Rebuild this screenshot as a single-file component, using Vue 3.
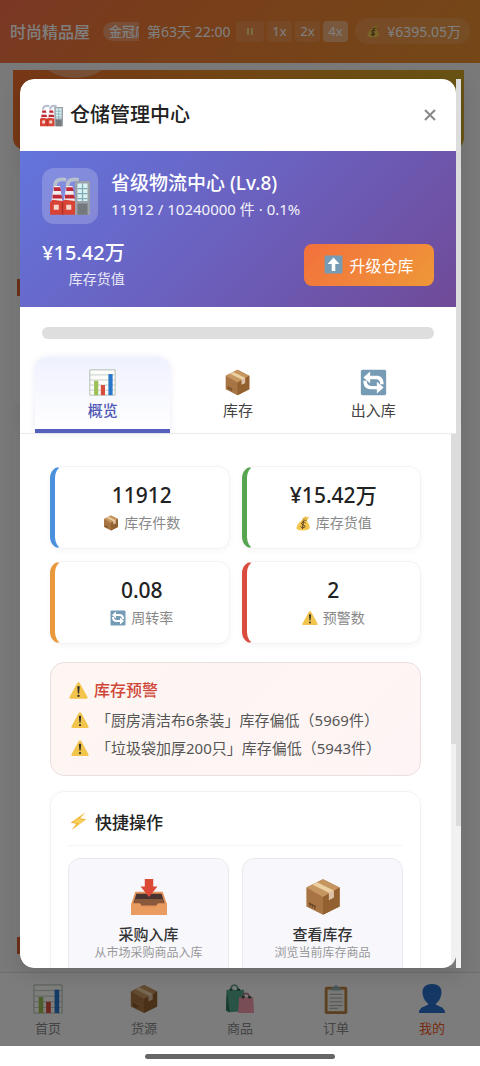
<template>
  <div class="page">
    <svg class="sprite" aria-hidden="true">
      <symbol id="factory" viewBox="0 0 32 32">
        <path d="M4 8c0-5 4-6 9-5M14 8c0-5 4-6 9-5" fill="none" stroke="#b7c0cf" stroke-width="3" />
        <path d="M20 4h12v27H20z" fill="#9ba1a8" />
        <path d="M22 6h8v14h-8z" fill="#d9f1f2" />
        <path d="M22 10h8M22 14h8M22 18h8M26 6v14" stroke="#7eabb5" stroke-width="1" />
        <path d="M22 22h8v9h-8z" fill="#74797e" />
        <path d="M3 8h5l2 13H1zM13 8h5l2 13h-9z" fill="#f3eeee" />
        <path d="M3 9h5l1 3H3zM2 15h7l1 3H2zM13 9h5l1 3h-6zM12 15h7l1 3h-8z" fill="#bd2937" />
        <path d="M0 21l2-2 8 1 2-1 8 1v11H0z" fill="#d94335" />
        <path d="M10 21v10" stroke="#a62f2a" stroke-width="1" />
        <path d="M3 23h4v4H3zM13 23h4v4h-4z" fill="#f5d7cd" />
      </symbol>
      <symbol id="chart" viewBox="0 0 32 32">
        <path d="M1 1h30v30H1z" fill="#fcfdfb" stroke="#aab5aa" />
        <path d="M1 7h30M1 13h30M1 19h30M1 25h30" stroke="#bdc8bd" />
        <path d="M6 14h5v17H6z" fill="#9dbf58" />
        <path d="M14 19h5v12h-5z" fill="#d84d3c" />
        <path d="M23 6h5v25h-5z" fill="#2877cb" />
      </symbol>
      <symbol id="box" viewBox="0 0 32 32">
        <path d="M16 1l14 7v16l-14 7L2 24V8z" fill="#a87443" />
        <path d="M16 1l14 7-14 8L2 8z" fill="#c59660" />
        <path d="M16 16l14-8v16l-14 7z" fill="#93602f" />
        <path d="M7 5.500l4-2 14 7v6l-4 2v-6z" fill="#ecd0a0" />
        <path d="M21 12.500l4-2v6l-4 2z" fill="#ddbfa8" />
        <path d="M5 22v2M7 23v2M9 24v2M4 21l6 3" stroke="#684524" />
      </symbol>
      <symbol id="cycle" viewBox="0 0 32 32">
        <rect x="1" y="1" width="30" height="30" rx="2" fill="#769cb5" />
        <path
          d="M4 10l8-7v5h7c6 0 9 3 9 10h-4c0-4-2-6-5-6h-7v5zM28 22l-8-7v5h-7c-3 0-5-2-5-6H4c0 7 3 10 9 10h7v5z"
          fill="#fff"
        />
      </symbol>
      <symbol id="up" viewBox="0 0 32 32">
        <rect x="1" y="1" width="30" height="30" rx="2" fill="#769cb5" />
        <path d="M16 4l10 11h-7v12h-6V15H6z" fill="#fff" />
      </symbol>
      <symbol id="money" viewBox="0 0 32 32">
        <path d="M17 9c-7 2-15 13-14 18 1 5 23 5 26 0 2-4-3-14-8-18z" fill="#f3c64e" />
        <path d="M16 9l-2-4 4 1 3-4 2 3 6-2-6 8z" fill="#e8b63d" />
        <path d="M15 10l8 1" stroke="#8b642c" stroke-width="2" />
        <path d="M21 16c-3-3-8-2-8 1 0 4 7 2 7 6 0 3-6 3-9 0M17 12l-2 16" fill="none" stroke="#5c4223" stroke-width="2" />
      </symbol>
      <symbol id="warn" viewBox="0 0 32 32">
        <path d="M16 2c1 0 2 1 3 3l12 22c1 2 0 3-2 3H3c-2 0-3-1-2-3L13 5c1-2 2-3 3-3z" fill="#f2c44c" />
        <path d="M14 10c0-2 4-2 4 0l-1 11h-2z" fill="#30302c" />
        <circle cx="16" cy="25" r="2" fill="#30302c" />
      </symbol>
      <symbol id="bolt" viewBox="0 0 32 32">
        <path d="M28 0L1 19l10 2-8 11 26-19-11-2z" fill="#f1b53b" />
        <path d="M28 0L6 18l10 2L3 32l22-18-11-2z" fill="#f8d25d" />
      </symbol>
      <symbol id="inbox" viewBox="0 0 36 36">
        <path d="M5 13h26l4 12v10H1V25z" fill="#e4935a" />
        <path d="M6 15h24l3 10H3z" fill="#493331" />
        <path d="M5 20h26l2 6H3z" fill="#8a593b" />
        <path d="M1 24h8c2 0 1 4 4 4h10c3 0 2-4 4-4h8v11H1z" fill="#e99b60" />
        <path d="M14 1h8v7h4l-8 10-8-10h4z" fill="#dc4937" />
      </symbol>
      <symbol id="bags" viewBox="0 0 32 32">
        <path d="M6 8c0-9 8-9 8 0" fill="none" stroke="#6fa397" stroke-width="2" />
        <path d="M2 6h18l2 23-19 1-2-3z" fill="#52a78a" />
        <path d="M2 6l3 24-4-2z" fill="#2d755d" />
        <path d="M15 14h15l1 17H14z" fill="#f09aac" />
        <path d="M19 16c0-8 7-8 7 0" fill="none" stroke="#b57480" stroke-width="2" />
        <path d="M5 6h3M13 6h3M18 14h3M25 14h3" stroke="#234b41" stroke-width="2" />
      </symbol>
      <symbol id="clip" viewBox="0 0 32 32">
        <rect x="4" y="3" width="24" height="29" rx="2" fill="#b9803e" />
        <path d="M7 6h18v23H7z" fill="#f1f2eb" />
        <path d="M11 7V4h3c0-4 4-4 4 0h3v3z" fill="#8fb0b8" />
        <path d="M9 11h14M9 15h14M9 19h14M9 23h14M9 26h9" stroke="#9fa7a7" />
      </symbol>
      <symbol id="person" viewBox="0 0 32 32">
        <path d="M16 0c8 0 11 5 10 11-1 5-3 8-6 10 0 3 10 2 10 10H2c0-8 10-7 10-10-3-2-5-5-6-10C5 5 8 0 16 0z" fill="#2a6fc9" />
      </symbol>
    </svg>

    <header class="topbar">
      <strong class="shop">时尚精品屋</strong>
      <span class="rank">金冠店</span>
      <span class="clock">第63天 22:00</span>
      <div class="speeds">
        <button class="speed pause" aria-label="暂停"><i></i><i></i></button>
        <button v-for="s in speeds" :key="s" class="speed" :class="{ on: s === '4x' }">{{ s }}</button>
      </div>
      <span class="cash"><svg><use href="#money" /></svg>¥6395.05万</span>
    </header>

    <main class="backdrop">
      <div class="hero"><div class="hero-badge"></div></div>
      <div class="panel"><i class="mark"></i></div>
      <div class="panel low"><i class="mark"></i></div>
    </main>

    <nav class="bottom-nav">
      <a v-for="n in navs" :key="n.name" href="#" class="nav-item" :class="{ active: n.name === '我的' }">
        <svg><use :href="n.icon" /></svg>
        {{ n.name }}
      </a>
    </nav>
    <div class="home-strip"><div class="home-bar"></div></div>

    <div class="overlay">
      <section class="modal" role="dialog" aria-labelledby="modal-title">
        <div class="modal-main">
          <div class="modal-head">
            <h2 id="modal-title"><svg><use href="#factory" /></svg>仓储管理中心</h2>
            <button class="close" aria-label="关闭">
              <svg viewBox="0 0 12 12"><path d="M1 1l10 10M11 1L1 11" /></svg>
            </button>
          </div>

          <div class="summary">
            <div class="depot">
              <div class="depot-icon"><svg><use href="#factory" /></svg></div>
              <div>
                <h3>省级物流中心 (Lv.8)</h3>
                <p>11912 / 10240000 件 · 0.1%</p>
              </div>
            </div>
            <div class="value-row">
              <div class="value">
                <strong>¥15.42万</strong>
                <span>库存货值</span>
              </div>
              <button class="upgrade"><svg><use href="#up" /></svg>升级仓库</button>
            </div>
          </div>

          <div class="capacity"><div class="track"></div></div>

          <div class="tabs" role="tablist">
            <button
              v-for="t in tabs"
              :key="t.name"
              class="tab"
              :class="{ active: t.name === tab }"
              role="tab"
              :aria-selected="t.name === tab"
              @click="tab = t.name"
            >
              <svg><use :href="t.icon" /></svg>
              {{ t.name }}
            </button>
          </div>

          <div class="body">
            <div class="content">
              <div class="stats">
                <div v-for="s in stats" :key="s.label" class="stat" :class="s.color">
                  <strong>{{ s.value }}</strong>
                  <span><svg><use :href="s.icon" /></svg>{{ s.label }}</span>
                </div>
              </div>

              <div class="alerts">
                <h4><svg><use href="#warn" /></svg>库存预警</h4>
                <ul>
                  <li v-for="a in alerts" :key="a"><svg><use href="#warn" /></svg>{{ a }}</li>
                </ul>
              </div>

              <div class="quick">
                <h4><svg><use href="#bolt" /></svg>快捷操作</h4>
                <div class="actions">
                  <button v-for="a in actions" :key="a.name" class="action">
                    <svg><use :href="a.icon" /></svg>
                    <strong>{{ a.name }}</strong>
                    <span>{{ a.desc }}</span>
                  </button>
                </div>
              </div>
            </div>
            <div class="bar"><div class="thumb inner"></div></div>
          </div>
        </div>
        <div class="bar"><div class="thumb outer"></div></div>
      </section>
    </div>
  </div>
</template>

<script setup>
import { ref } from 'vue'

const tab = ref('概览')
const speeds = ['1x', '2x', '4x']
const tabs = [
  { name: '概览', icon: '#chart' },
  { name: '库存', icon: '#box' },
  { name: '出入库', icon: '#cycle' }
]
const stats = [
  { value: '11912', label: '库存件数', icon: '#box', color: 'blue' },
  { value: '¥15.42万', label: '库存货值', icon: '#money', color: 'green' },
  { value: '0.08', label: '周转率', icon: '#cycle', color: 'orange' },
  { value: '2', label: '预警数', icon: '#warn', color: 'red' }
]
const alerts = ['「厨房清洁布6条装」库存偏低（5969件）', '「垃圾袋加厚200只」库存偏低（5943件）']
const actions = [
  { name: '采购入库', desc: '从市场采购商品入库', icon: '#inbox' },
  { name: '查看库存', desc: '浏览当前库存商品', icon: '#box' }
]
const navs = [
  { name: '首页', icon: '#chart' },
  { name: '货源', icon: '#box' },
  { name: '商品', icon: '#bags' },
  { name: '订单', icon: '#clip' },
  { name: '我的', icon: '#person' }
]
</script>

<style>
body {
  margin: 0;
}
</style>

<style scoped>
* {
  box-sizing: border-box;
}
h2,
h3,
h4,
p,
ul {
  margin: 0;
  padding: 0;
  font-weight: 500;
}
button {
  border: 0;
  padding: 0;
  background: none;
  font: inherit;
  color: inherit;
  cursor: pointer;
}
svg {
  flex: none;
}
.page {
  position: relative;
  display: flex;
  flex-direction: column;
  height: 100vh;
  overflow: hidden;
  background: #f2f2f2;
  color: #222;
  font-family: 'Noto Sans', 'Noto Sans CJK SC', sans-serif;
  font-size: 14px;
}
.sprite {
  position: absolute;
  width: 0;
  height: 0;
}

.topbar {
  display: flex;
  align-items: center;
  height: 63px;
  flex: none;
  padding: 0 10px 1px;
  background: linear-gradient(135deg, #f5704a, #f07b36 30%, #ea9030);
  color: #fff;
  white-space: nowrap;
}
.shop {
  font-size: 16px;
  font-weight: 500;
}
.rank {
  width: 36px;
  margin: 0 8px 0 13px;
  padding-left: 6px;
  overflow: hidden;
  border-radius: 10px 0 0 10px;
  background: rgba(255, 255, 255, 0.25);
  font-size: 13px;
  font-weight: 500;
  line-height: 19px;
}
.clock {
  width: 84px;
}
.speeds {
  display: flex;
  gap: 3px;
  margin-left: 5px;
}
.speed {
  display: flex;
  align-items: center;
  justify-content: center;
  gap: 2px;
  width: 25px;
  height: 21px;
  border-radius: 4px;
  background: rgba(255, 255, 255, 0.12);
  font-size: 13px;
}
.speed.on {
  background: rgba(255, 255, 255, 0.35);
}
.pause {
  width: 28px;
}
.pause i {
  width: 2px;
  height: 7px;
  background: #f5dc80;
}
.cash {
  display: flex;
  align-items: center;
  gap: 7px;
  height: 26px;
  margin-left: auto;
  padding: 0 9px 0 11px;
  border-radius: 13px;
  background: rgba(255, 255, 255, 0.12);
}
.cash svg {
  width: 14px;
  height: 14px;
}

.backdrop {
  flex: 1;
  min-height: 0;
  padding: 7px 16px 0 13px;
  overflow: hidden;
}
.hero {
  height: 80px;
  overflow: hidden;
  border-radius: 0 0 12px 12px;
  background: linear-gradient(100deg, #f0702e, #e8902a 50%, #d0a828);
}
.hero-badge {
  width: 60px;
  height: 30px;
  margin: -22px 0 0 32px;
  border-radius: 50%;
  background: rgba(255, 255, 255, 0.3);
}
.panel {
  display: flex;
  flex-direction: column;
  justify-content: center;
  height: 240px;
  margin-top: 17px;
  border-radius: 12px;
  background: #f6f6f6;
}
.panel.low {
  height: 530px;
  justify-content: flex-end;
  margin-bottom: 40px;
}
.mark {
  width: 12px;
  height: 17px;
  margin-left: 4px;
  background: #d8642f;
}

.bottom-nav {
  display: flex;
  flex: none;
  height: 74px;
  border-top: 1px solid #dcdcdc;
  background: #f8f8f8;
}
.nav-item {
  display: flex;
  flex: 1;
  flex-direction: column;
  align-items: center;
  gap: 5px;
  padding-top: 11px;
  color: #888;
  font-size: 13px;
  line-height: 18px;
  text-decoration: none;
}
.nav-item svg {
  width: 30px;
  height: 30px;
}
.nav-item.active {
  color: #f0582a;
}
.home-strip {
  flex: none;
  height: 20px;
  padding-top: 8px;
  background: #fff;
}
.home-bar {
  width: 190px;
  height: 5px;
  margin: 0 auto;
  border-radius: 3px;
  background: #666;
}

.overlay {
  position: absolute;
  inset: 0 0 20px;
  display: flex;
  align-items: center;
  padding: 1px 19px 0 20px;
  background: rgba(0, 0, 0, 0.5);
}
.modal {
  display: flex;
  width: 100%;
  height: 85%;
  overflow: hidden;
  border-radius: 14px 0 0 14px;
  box-shadow: 0 6px 20px rgba(0, 0, 0, 0.12);
}
.modal-main {
  display: flex;
  flex: 1;
  flex-direction: column;
  min-width: 0;
  overflow: hidden;
  border-radius: 14px;
  background: #fff;
}
.bar {
  flex: none;
  width: 5px;
  background: #f1f1f1;
}
.thumb {
  background: #dcdcdc;
}
.thumb.inner {
  height: 58%;
}
.thumb.outer {
  height: 84%;
}
.modal-head {
  display: flex;
  flex: none;
  align-items: center;
  justify-content: space-between;
  height: 72px;
  padding: 0 20px;
}
.modal-head h2 {
  display: flex;
  align-items: center;
  gap: 7px;
  font-size: 20px;
  line-height: 28px;
}
.modal-head h2 svg {
  width: 23px;
  height: 23px;
}
.close {
  display: flex;
}
.close svg {
  width: 12px;
  height: 12px;
  fill: none;
  stroke: #888;
  stroke-width: 2;
}

.summary {
  flex: none;
  padding: 17px 22px 16px;
  background: linear-gradient(135deg, #6375dd, #6b60bd 50%, #704a98);
  color: #fff;
}
.depot {
  display: flex;
  gap: 13px;
}
.depot-icon {
  display: flex;
  align-items: center;
  justify-content: center;
  width: 56px;
  height: 56px;
  border-radius: 12px;
  background: rgba(255, 255, 255, 0.2);
}
.depot-icon svg {
  width: 40px;
  height: 40px;
}
.depot h3 {
  padding-top: 2px;
  font-size: 19px;
  line-height: 26px;
}
.depot p {
  font-size: 15px;
  font-weight: 400;
  line-height: 26px;
  opacity: 0.92;
}
.value-row {
  display: flex;
  justify-content: space-between;
  align-items: center;
  margin-top: 14px;
}
.value {
  display: flex;
  flex-direction: column;
  align-items: flex-end;
}
.value strong {
  font-size: 20px;
  font-weight: 500;
  line-height: 29px;
}
.value span {
  line-height: 24px;
  opacity: 0.85;
}
.upgrade {
  display: flex;
  align-items: center;
  justify-content: center;
  gap: 6px;
  width: 130px;
  height: 42px;
  border-radius: 8px;
  background: linear-gradient(135deg, #f3703c, #ee9838);
  font-size: 16px;
}
.upgrade svg {
  width: 19px;
  height: 19px;
}
.capacity {
  flex: none;
  padding: 20px 22px 18px;
}
.track {
  height: 12px;
  border-radius: 6px;
  background: #dedede;
}
.tabs {
  display: flex;
  flex: none;
  padding: 0 15px;
  border-bottom: 1px solid #eaeaea;
}
.tab {
  display: flex;
  flex: 1;
  flex-direction: column;
  align-items: center;
  gap: 3px;
  height: 76px;
  padding-top: 12px;
  border-bottom: 4px solid transparent;
  color: #444;
  font-size: 15px;
  line-height: 22px;
}
.tab svg {
  width: 27px;
  height: 27px;
}
.tab.active {
  border-radius: 12px 12px 0 0;
  border-color: #5560bd;
  background: linear-gradient(#eff1fe, #fff);
  box-shadow: 0 0 6px rgba(90, 100, 200, 0.12);
  color: #5057b4;
  font-weight: 500;
}

.body {
  display: flex;
  flex: 1;
  min-height: 0;
}
.content {
  flex: 1;
  min-width: 0;
  padding: 32px 30px 0;
  overflow: hidden;
}
.stats {
  display: grid;
  grid-template-columns: 1fr 1fr;
  gap: 12px;
}
.stat {
  display: flex;
  flex-direction: column;
  align-items: center;
  height: 83px;
  padding-top: 12px;
  border: 1px solid #f3f3f3;
  border-left: 5px solid;
  border-radius: 12px;
  box-shadow: 0 2px 6px rgba(0, 0, 0, 0.04);
}
.stat.blue {
  border-left-color: #4a90dc;
}
.stat.green {
  border-left-color: #58a551;
}
.stat.orange {
  border-left-color: #e9983b;
}
.stat.red {
  border-left-color: #d94c3e;
}
.stat strong {
  font-size: 21px;
  font-weight: 500;
  line-height: 32px;
}
.stat span {
  display: flex;
  align-items: center;
  gap: 5px;
  color: #888;
  line-height: 24px;
}
.stat svg {
  width: 16px;
  height: 16px;
}

.alerts {
  margin-top: 18px;
  padding: 14px 18px 13px;
  border: 1px solid #eadede;
  border-radius: 14px;
  background: linear-gradient(135deg, #fdf6f2, #fef4f5);
}
.alerts h4 {
  display: flex;
  align-items: center;
  gap: 6px;
  color: #cf4638;
  font-size: 16px;
  line-height: 26px;
}
.alerts h4 svg {
  width: 19px;
  height: 19px;
}
.alerts ul {
  padding: 3px 0 0 2px;
  list-style: none;
}
.alerts li {
  display: flex;
  align-items: center;
  gap: 7px;
  color: #555;
  font-size: 15px;
  font-weight: 400;
  line-height: 28px;
  white-space: nowrap;
}
.alerts li svg {
  width: 18px;
  height: 18px;
}

.quick {
  margin-top: 15px;
  padding: 11px 17px;
  border: 1px solid #f2f2f2;
  border-radius: 14px;
  box-shadow: 0 1px 6px rgba(0, 0, 0, 0.03);
}
.quick h4 {
  display: flex;
  align-items: center;
  gap: 7px;
  height: 43px;
  padding: 0 0 6px 2px;
  border-bottom: 1px solid #f6f6f6;
  font-size: 17px;
}
.quick h4 svg {
  width: 18px;
  height: 18px;
}
.actions {
  display: grid;
  grid-template-columns: 1fr 1fr;
  gap: 13px;
  margin-top: 12px;
}
.action {
  display: flex;
  flex-direction: column;
  align-items: center;
  height: 130px;
  padding-top: 19px;
  border: 1px solid #e8e8f0;
  border-radius: 12px;
  background: #f7f7fc;
}
.action svg {
  width: 38px;
  height: 38px;
}
.action strong {
  margin-top: 8px;
  color: #333;
  font-size: 15px;
  font-weight: 500;
  line-height: 20px;
}
.action span {
  color: #999;
  font-size: 12px;
  line-height: 17px;
}
</style>
